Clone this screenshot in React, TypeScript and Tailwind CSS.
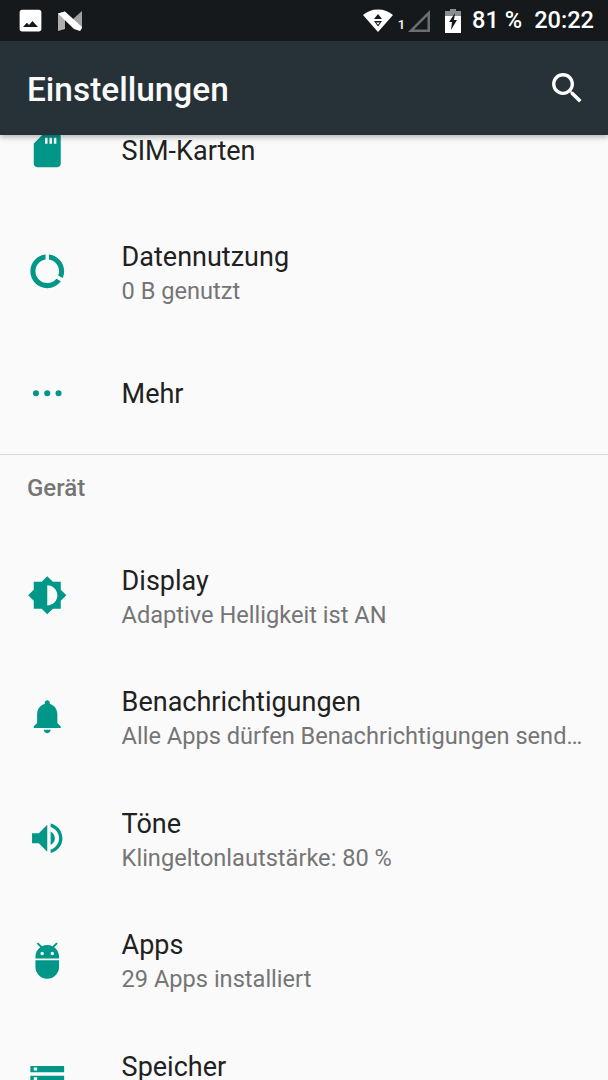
const Ic = ({ d, cls = "fill-[#009688]" }: { d: string; cls?: string }) => (
  <svg viewBox="0 0 24 24" className={`w-[40.5px] h-[40.5px] ${cls}`}>
    <path d={d} fillRule="evenodd" />
  </svg>
);

const paths = {
  sim: "M20 4c0-1.1-.9-2-2-2h-8L4 8v12c0 1.1.9 2 2 2h12c1.1 0 2-.9 2-2V4zM10.7 4.6h1.5v3.6h-1.5zM13.3 4.6h1.5v3.6h-1.5zM15.9 4.6h1.5v3.6h-1.5z",
  data: "M13 2.05v3.03c3.39.49 6 3.39 6 6.92 0 .9-.18 1.75-.48 2.54l2.6 1.53c.56-1.24.88-2.6.88-4.07 0-5.18-3.95-9.45-9-9.95zM12 19c-3.87 0-7-3.13-7-7 0-3.53 2.61-6.43 6-6.92V2.05c-5.06.5-9 4.76-9 9.95 0 5.52 4.47 10 9.99 10 3.31 0 6.24-1.61 8.06-4.09l-2.6-1.53C16.17 17.98 14.21 19 12 19z",
  more: "M5.3 10.2a1.8 1.8 0 1 0 0 3.6a1.8 1.8 0 1 0 0-3.6zM12 10.2a1.8 1.8 0 1 0 0 3.6a1.8 1.8 0 1 0 0-3.6zM18.7 10.2a1.8 1.8 0 1 0 0 3.6a1.8 1.8 0 1 0 0-3.6z",
  display: "M20 15.31L23.31 12 20 8.69V4h-4.69L12 .69 8.69 4H4v4.69L.69 12 4 15.31V20h4.69L12 23.31 15.31 20H20v-4.69zM12 18V6c3.31 0 6 2.69 6 6s-2.69 6-6 6z",
  bell: "M12 22c1.1 0 2-.9 2-2h-4c0 1.1.9 2 2 2zm6-6v-5c0-3.07-1.63-5.64-4.5-6.32V4c0-.83-.67-1.5-1.5-1.5s-1.5.67-1.5 1.5v.68C7.64 5.36 6 7.92 6 11v5l-2 2v1h16v-1l-2-2z",
  sound: "M3 9v6h4l5 5V4L7 9H3zm13.5 3c0-1.77-1.02-3.29-2.5-4.03v8.05c1.48-.73 2.5-2.25 2.5-4.02zM14 3.23v2.06c2.89.86 5 3.54 5 6.71s-2.11 5.85-5 6.71v2.06c4.01-.91 7-4.49 7-8.77s-2.99-7.86-7-8.77z",
  apps: "M5 16c0 3.87 3.13 7 7 7s7-3.13 7-7v-4H5v4zM16.12 4.37l2.1-2.1-.82-.83-2.3 2.31C14.16 3.28 13.12 3 12 3s-2.16.28-3.09.75L6.6 1.44l-.82.83 2.1 2.1C6.14 5.64 5 7.68 5 10v1h14v-1c0-2.32-1.14-4.36-2.88-5.63zM9 9c-.55 0-1-.45-1-1s.45-1 1-1 1 .45 1 1-.45 1-1 1zm6 0c-.55 0-1-.45-1-1s.45-1 1-1 1 .45 1 1-.45 1-1 1z",
  storage: "M2 18.7h20v-4H2v4zm2-3h2v2H4v-2zM2 2.9v3.8h20V2.9H2zm4 2.8H4V3.9h2v1.8zm-4 7h20v-4H2v4zm2-3h2v2H4v-2z",
};

const Row = ({ icon, title, sub }: { icon: string; title: string; sub?: string }) => (
  <div className="h-[121.6px] flex items-center pl-[27px] pr-[22px]">
    <div className="w-[94.6px] shrink-0">
      <Ic d={icon} />
    </div>
    <div className={`min-w-0 flex-1 flex flex-col ${sub ? "pt-[5px]" : "pt-[2px]"}`}>
      <div className="text-[27px] leading-[34px] text-[#212121] truncate">{title}</div>
      {sub && <div className="text-[23.6px] leading-[34px] text-[#757575] truncate">{sub}</div>}
    </div>
  </div>
);

export default function App() {
  return (
    <div className="w-[608px] h-[1080px] overflow-hidden flex flex-col bg-[#fafafa] font-['Roboto',sans-serif]">
      <div className="relative z-10 shrink-0 shadow-[0_2px_6px_rgba(0,0,0,0.3)]">
        <div className="h-[41px] bg-[#15191c] flex items-center pl-[16px] pr-[14px]">
          <svg viewBox="0 0 24 24" className="w-[29px] h-[29px] fill-white">
            <path d="M21 19V5c0-1.1-.9-2-2-2H5c-1.1 0-2 .9-2 2v14c0 1.1.9 2 2 2h14c1.1 0 2-.9 2-2zM5.8 17.4l3.2-3.6 1.8 2 2.8-3.4 4.6 5z" fillRule="evenodd" />
          </svg>
          <svg viewBox="0 0 24 20" className="ml-[13px] w-[24px] h-[20px]">
            <polygon points="0,2.5 7,0.5 7,18 0,20" fill="#b0b0b0" />
            <polygon points="15,8 24,0 24,17.5 22,20" fill="#a0a0a0" />
            <polygon points="0,2.5 7,0.5 24,16 22,20 16,18" fill="#ffffff" />
          </svg>
          <div className="flex-1" />
          <svg viewBox="0 0 30 24" className="w-[30px] h-[24px]">
            <path d="M15 23L0 6C4 2.5 9 0.5 15 0.5S26 2.5 30 6z" fill="#fff" />
            <path d="M15 5l4 5h-8zM11 12h8l-4 5.5z" fill="#15191c" />
            <path d="M13.2 13.4h3.6L15 15.8z" fill="#fff" />
          </svg>
          <span className="ml-[5px] mt-[9px] text-[13px] leading-[16px] font-medium text-white">1</span>
          <svg viewBox="0 0 24 24" className="ml-[2px] w-[24px] h-[24px]">
            <path d="M23 1v22H1zM20.5 7L7 20.5h13.5z" fill="#6b6e70" fillRule="evenodd" />
          </svg>
          <svg viewBox="0 0 16 24" className="ml-[14px] w-[16px] h-[24px]">
            <path d="M5 0h6v2h5v5H0V2h5z" fill="#8a8c8e" />
            <path d="M0 7h16v17H0z" fill="#fff" />
            <path d="M10 4L4 13h3l-1 8 6-10H9z" fill="#15191c" />
          </svg>
          <span className="ml-[11px] text-[23.6px] leading-none font-medium text-white">81 %</span>
          <span className="ml-[12px] text-[23.6px] leading-none font-medium text-white">20:22</span>
        </div>
        <div className="h-[94px] bg-[#263238] flex items-center justify-between pl-[27px] pr-[21px]">
          <span className="pt-[3px] text-[33.4px] leading-none font-medium text-[#fafafa]">Einstellungen</span>
          <svg viewBox="0 0 24 24" className="w-[40.5px] h-[40.5px] fill-white">
            <path d="M15.5 14h-.79l-.28-.27C15.41 12.59 16 11.11 16 9.5 16 5.91 13.09 3 9.5 3S3 5.91 3 9.5 5.91 16 9.5 16c1.61 0 3.09-.59 4.23-1.57l.27.28v.79l5 4.99L20.49 19l-4.99-5zm-6 0C7.01 14 5 11.99 5 9.5S7.01 5 9.5 5 14 7.01 14 9.5 11.99 14 9.5 14z" />
          </svg>
        </div>
      </div>
      <div className="flex-1 overflow-hidden">
        <div className="-mt-[46px]">
          <Row icon={paths.sim} title="SIM-Karten" />
          <Row icon={paths.data} title="Datennutzung" sub="0 B genutzt" />
          <Row icon={paths.more} title="Mehr" />
          <div className="h-[80.5px] border-t border-[#d9d9d9] pl-[27px] pt-[19px] text-[24px] leading-[28px] font-medium text-[#757575]">
            Gerät
          </div>
          <Row icon={paths.display} title="Display" sub="Adaptive Helligkeit ist AN" />
          <Row icon={paths.bell} title="Benachrichtigungen" sub="Alle Apps dürfen Benachrichtigungen senden" />
          <Row icon={paths.sound} title="Töne" sub="Klingeltonlautstärke: 80 %" />
          <Row icon={paths.apps} title="Apps" sub="29 Apps installiert" />
          <Row icon={paths.storage} title="Speicher" sub={"\u00a0"} />
        </div>
      </div>
    </div>
  );
}
